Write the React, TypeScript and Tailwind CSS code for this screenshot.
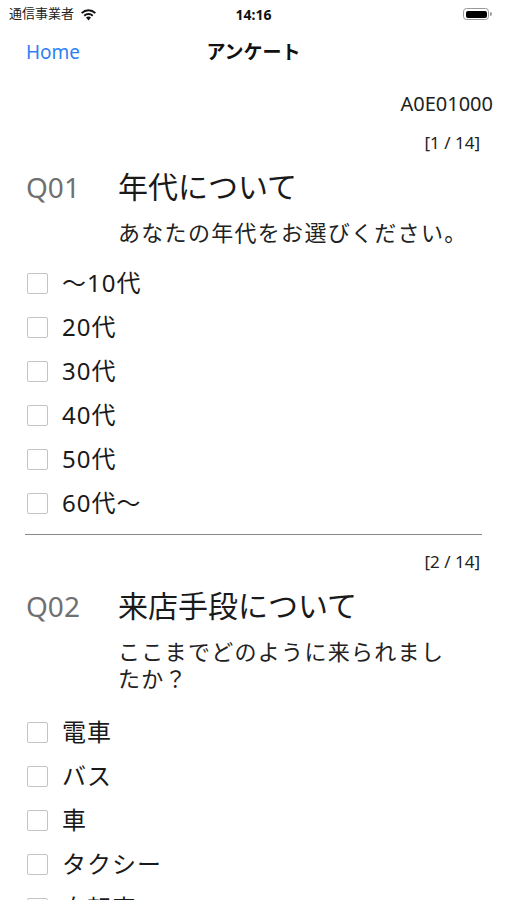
import React from 'react';

const questions = [
    {
        page: '[1 / 14]',
        no: 'Q01',
        title: '年代について',
        lines: ['あなたの年代をお選びください。'],
        options: ['〜10代', '20代', '30代', '40代', '50代', '60代〜'],
        listGap: 'mt-[15px]',
    },
    {
        page: '[2 / 14]',
        no: 'Q02',
        title: '来店手段について',
        lines: ['ここまでどのように来られまし', 'たか？'],
        options: ['電車', 'バス', '車', 'タクシー', '自転車'],
        listGap: 'mt-[18px]',
    },
];

const StatusBar: React.FC = () => (
    <div className="h-[28px] flex items-center justify-between px-[9px] relative">
        <div className="flex items-center gap-[6px]">
            <span className="text-[13px] text-[#222]">通信事業者</span>
            <svg width="17" height="13" viewBox="0 0 17 13">
                <path d="M8.5 12.5 L6 9.6 A3.6 3.6 0 0 1 11 9.6 Z" fill="#111" />
                <path d="M3.6 7.1 A7 7 0 0 1 13.4 7.1 L12.1 8.5 A5.1 5.1 0 0 0 4.9 8.5 Z" fill="#111" />
                <path d="M1 4.4 A10.8 10.8 0 0 1 16 4.4 L14.7 5.8 A8.9 8.9 0 0 0 2.3 5.8 Z" fill="#111" />
            </svg>
        </div>
        <span className="absolute left-1/2 -translate-x-1/2 text-[14px] font-bold text-[#111]">14:16</span>
        <div className="flex items-center mr-[6px]">
            <div className="w-[26px] h-[12px] rounded-[3.5px] border border-[#999] p-[1.5px]">
                <div className="w-full h-full bg-black rounded-[2px]" />
            </div>
            <div className="w-[2px] h-[4px] bg-[#999] rounded-r-sm ml-[1px]" />
        </div>
    </div>
);

const NavBar: React.FC = () => (
    <div className="h-[48px] flex items-center relative px-[26px]">
        <span className="text-[19px] text-[#2f80f5]">Home</span>
        <span className="absolute left-1/2 -translate-x-1/2 text-[19px] font-bold text-[#111]">アンケート</span>
    </div>
);

const Question: React.FC<{ q: (typeof questions)[number] }> = ({ q }) => (
    <div>
        <div className="text-right pr-[27px] text-[17px] leading-[24px] text-[#222]">{q.page}</div>
        <div className="grid grid-cols-[118px_1fr] mt-[14px] leading-[36px]">
            <div className="pl-[26px] text-[28px] text-[#707070]">{q.no}</div>
            <div className="text-[30px] text-[#1a1a1a]">{q.title}</div>
        </div>
        <div className="pl-[118px] mt-[14px] text-[22px] tracking-[1.3px] leading-[27px] text-[#222]">
            {q.lines.map((line, i) => (
                <div key={i}>{line}</div>
            ))}
        </div>
        <div className={q.listGap}>
            {q.options.map((opt, i) => (
                <div key={i} className="h-[44px] flex items-center pl-[27px]">
                    <div className="w-[21px] h-[21px] border-[1.5px] border-[#c4c4c4] rounded-[2px] bg-white shrink-0" />
                    <span className="ml-[14px] text-[24px] tracking-[1px] text-[#1a1a1a]">{opt}</span>
                </div>
            ))}
        </div>
    </div>
);

const App: React.FC = () => {
    return (
        <div
            className="w-[507px] h-[900px] overflow-hidden bg-white"
            style={{ fontFamily: '"Noto Sans", "Noto Sans CJK JP", sans-serif' }}
        >
            <StatusBar />
            <NavBar />
            <div className="text-right pr-[14px] mt-[14px] text-[20px] leading-[28px] text-[#222]">A0E01000</div>
            <div className="mt-[13px]">
                <Question q={questions[0]} />
            </div>
            <div className="mx-[25px] mt-[9px] h-px bg-[#8a8a8a]" />
            <div className="mt-[15px]">
                <Question q={questions[1]} />
            </div>
        </div>
    );
};

export default App;
